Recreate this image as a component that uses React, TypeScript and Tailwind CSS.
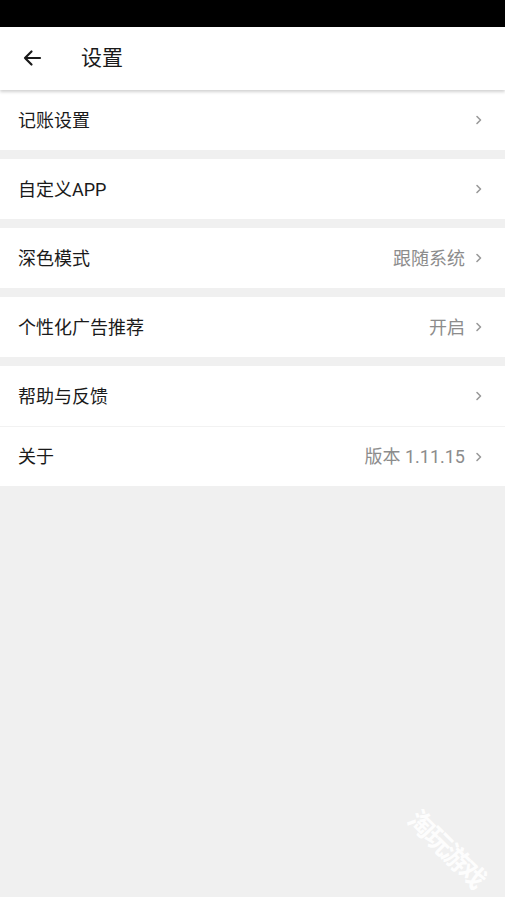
import React from 'react';

type Item = { label: string; value?: string };

const groups: Item[][] = [
  [{ label: '记账设置' }],
  [{ label: '自定义APP' }],
  [{ label: '深色模式', value: '跟随系统' }],
  [{ label: '个性化广告推荐', value: '开启' }],
  [{ label: '帮助与反馈' }, { label: '关于', value: '版本 1.11.15' }],
];

const Chevron = () => (
  <svg width="10" height="12" viewBox="0 0 10 12" className="ml-[9px]">
    <path d="M3 2.5 L6.5 6 L3 9.5" fill="none" stroke="#9a9a9a" strokeWidth="1.6" strokeLinecap="round" strokeLinejoin="round" />
  </svg>
);

const Row: React.FC<{ item: Item; border?: boolean }> = ({ item, border }) => (
  <div className={`flex h-[60px] items-center bg-white pl-[18px] pr-[21px] ${border ? 'border-t border-[#f2f2f2]' : ''}`}>
    <span className="flex-1 text-[18px] text-[#1a1a1a]">{item.label}</span>
    {item.value && <span className="text-[18px] text-[#8c8c8c]">{item.value}</span>}
    <Chevron />
  </div>
);

export default function App() {
  return (
    <div
      className="relative flex h-[897px] w-[505px] flex-col overflow-hidden bg-[#f0f0f0]"
      style={{ fontFamily: 'Roboto, "Noto Sans CJK SC", sans-serif' }}
    >
      <div className="h-[27px] bg-black" />
      <div className="relative z-10 flex h-[63px] items-center bg-white shadow-[0_2px_3px_rgba(0,0,0,0.18)]">
        <svg width="24" height="24" viewBox="0 0 24 24" className="ml-[20px] -mt-[1px]">
          <path d="M20 12H5 M11.5 5.5 L5 12 L11.5 18.5" fill="none" stroke="#1a1a1a" strokeWidth="2.2" strokeLinecap="round" strokeLinejoin="round" />
        </svg>
        <span className="ml-[37px] text-[21px] text-[#1a1a1a]">设置</span>
      </div>
      <div className="flex flex-col gap-[9px]">
        {groups.map((g, i) => (
          <div key={i} className="flex flex-col">
            {g.map((item, j) => (
              <Row key={item.label} item={item} border={j > 0} />
            ))}
          </div>
        ))}
      </div>
      <div className="absolute left-[398px] top-[830px] rotate-[45deg] text-[26px] font-bold tracking-[-2px] text-white opacity-90">
        淘玩游戏
      </div>
    </div>
  );
}
